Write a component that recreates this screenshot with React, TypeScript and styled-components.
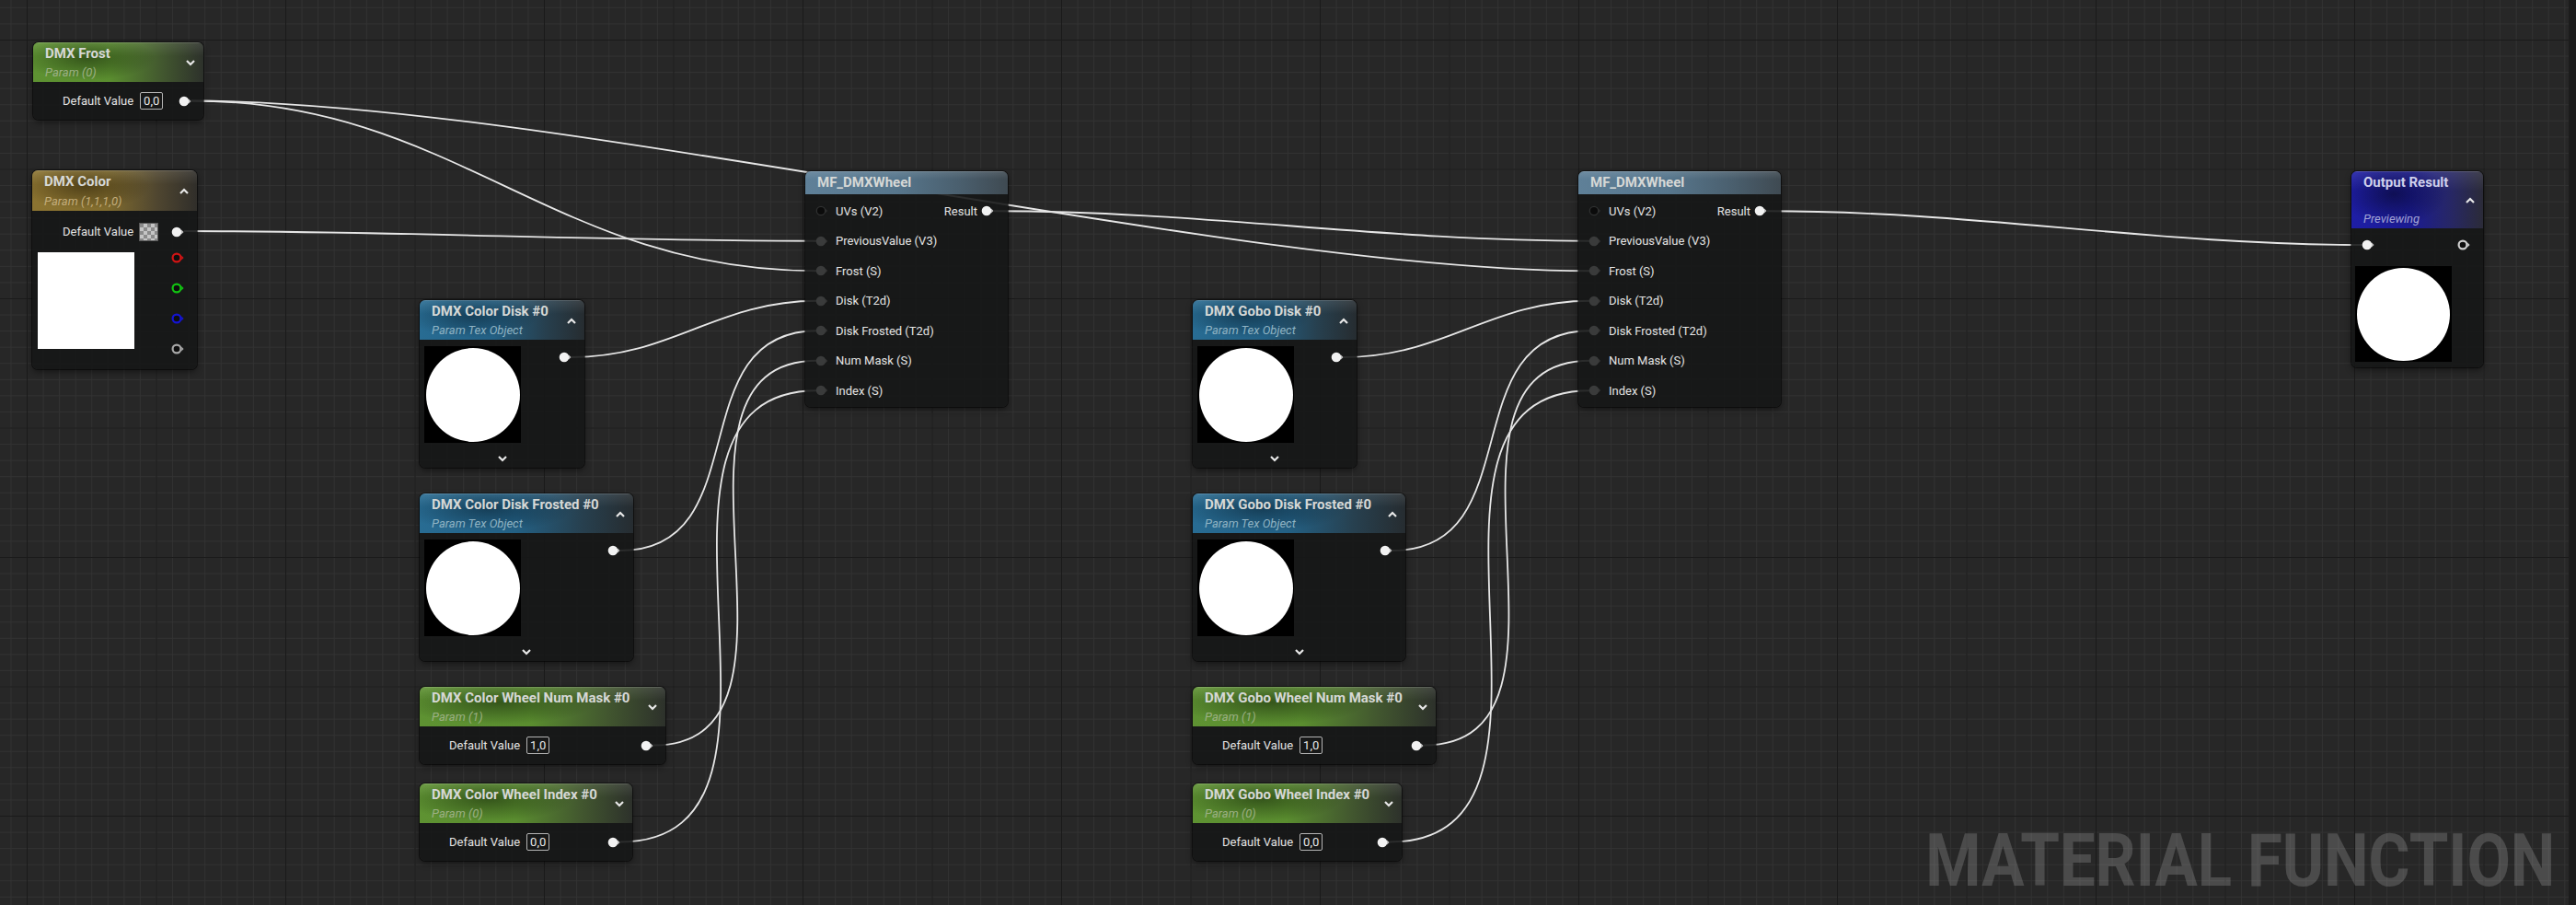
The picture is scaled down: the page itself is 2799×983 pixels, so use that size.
import { FC } from "react";
import styled, { createGlobalStyle } from "styled-components";

type Tint = "green" | "gold" | "blue" | "steel" | "violet";
type Pt = [number, number];

const gloss = "linear-gradient(to bottom, rgba(255,255,255,0.1), rgba(255,255,255,0) 35%)";
const shade = (c: string) =>
  `radial-gradient(ellipse 40% 55% at 32% 40%, ${c}, rgba(0,0,0,0) 100%)`;

const headerBg: Record<Tint, string> = {
  green: `${shade("rgba(22,40,10,0.55)")}, ${gloss}, linear-gradient(to right, #5e9232 0%, #5a8d2f 45%, #42572f 76%, #2d312b 100%)`,
  gold: `${shade("rgba(40,30,8,0.55)")}, ${gloss}, linear-gradient(to right, #8c7431 0%, #816c2e 45%, #4f4630 76%, #302e2a 100%)`,
  blue: `${shade("rgba(8,28,42,0.5)")}, ${gloss}, linear-gradient(to right, #286c93 0%, #236084 45%, #27404f 76%, #262c30 100%)`,
  steel: `${gloss}, linear-gradient(to right, #5f8098 0%, #57768c 45%, #4a5f6e 76%, #3f4a52 100%)`,
  violet: `${shade("rgba(6,6,40,0.6)")}, ${gloss}, linear-gradient(to right, #1e1ea6 0%, #1b1b92 45%, #272764 76%, #2b2b38 100%)`,
};

const subColor: Record<Tint, string> = {
  green: "#9cb084",
  gold: "#c3ad7b",
  blue: "#8fb3c3",
  steel: "#b0c0cc",
  violet: "#a3a4d6",
};

const GlobalStyle = createGlobalStyle`
  html, body {
    margin: 0;
    padding: 0;
    overflow: hidden;
    background: #1c1c1c;
  }
  body {
    font-family: Roboto, "Noto Sans", sans-serif;
  }
`;

const Screen = styled.div`
  display: flex;
  width: 2799px;
  height: 983px;
`;

const Canvas = styled.div`
  position: relative;
  flex: 1;
  height: 983px;
  overflow: hidden;
  background-color: #272727;
  background-image: linear-gradient(to right, #1a1a1a 1px, transparent 1px),
    linear-gradient(to bottom, #1a1a1a 1px, transparent 1px),
    linear-gradient(to right, #323232 1px, transparent 1px),
    linear-gradient(to bottom, #323232 1px, transparent 1px);
  background-size: 140.5px 140.5px, 140.5px 140.5px, 17.5625px 17.5625px,
    17.5625px 17.5625px;
  background-position: 29px 43px;
`;

const EdgeStrip = styled.div`
  width: 8px;
  background: #1c1c1c;
`;

const WireLayer = styled.svg`
  position: absolute;
  left: 0;
  top: 0;
  pointer-events: none;
`;

const Watermark = styled.div`
  position: absolute;
  right: 15px;
  bottom: 0;
  font: 700 80px/96px Roboto, "Noto Sans", sans-serif;
  color: rgba(255, 255, 255, 0.17);
  white-space: nowrap;
  transform: scaleX(0.86);
  transform-origin: right bottom;
`;

const NodeBox = styled.div<{ $x: number; $y: number; $w: number }>`
  position: absolute;
  left: ${(p) => p.$x}px;
  top: ${(p) => p.$y}px;
  width: ${(p) => p.$w}px;
  background: rgba(22, 23, 23, 0.9);
  border-radius: 6px;
  overflow: hidden;
  box-shadow: 0 0 0 1px rgba(0, 0, 0, 0.5), 0 3px 7px rgba(0, 0, 0, 0.45);
  color: #e4e4e4;
`;

const Header = styled.div<{ $tint: Tint; $h: number }>`
  box-sizing: border-box;
  height: ${(p) => p.$h}px;
  display: grid;
  grid-template-columns: 1fr auto;
  grid-template-rows: auto 1fr auto;
  padding: 4px 9px 3px 13px;
  background: ${(p) => headerBg[p.$tint]};
  box-shadow: inset 0 1px 0 rgba(255, 255, 255, 0.14);
`;

const Title = styled.div<{ $tint: Tint }>`
  grid-column: 1;
  grid-row: 1;
  font-size: 15px;
  line-height: 17px;
  font-weight: 700;
  color: ${(p) => (p.$tint === "violet" ? "#cfd0ec" : "#d6d8d6")};
  white-space: nowrap;
`;

const Subtitle = styled.div<{ $tint: Tint }>`
  grid-column: 1;
  grid-row: 3;
  font-size: 13px;
  line-height: 15px;
  font-style: italic;
  color: ${(p) => subColor[p.$tint]};
  white-space: nowrap;
`;

const ChevronSlot = styled.div`
  grid-column: 2;
  grid-row: 1 / span 3;
  align-self: center;
  display: flex;
`;

const ChevronGlyph = styled.svg<{ $down?: boolean }>`
  display: block;
  transform: ${(p) => (p.$down ? "rotate(180deg)" : "none")};
`;

const Row = styled.div<{ $h: number }>`
  display: flex;
  align-items: center;
  height: ${(p) => p.$h}px;
  font-size: 13px;
  white-space: nowrap;
`;

const ParamRow = styled(Row)`
  padding: 0 13px 0 32px;
`;

const ColorRow = styled(Row)`
  padding: 0 14px 0 33px;
`;

const ValueBox = styled.span`
  margin-left: 7px;
  padding: 0 3px;
  height: 17px;
  line-height: 17px;
  border: 1px solid #b4b4b4;
  border-radius: 2px;
  color: #e8e8e8;
`;

const Swatch = styled.span`
  margin-left: 6px;
  width: 19px;
  height: 18px;
  border: 1px solid #5a5a5a;
  background: repeating-conic-gradient(#c4c4c4 0 25%, #8a8a8a 0 50%) 0 0 / 8px 8px;
`;

const PushRight = styled.div`
  margin-left: auto;
  display: flex;
  align-items: center;
  gap: 4px;
`;

const PinGlyph = styled.svg`
  display: block;
  flex: none;
`;

const Preview = styled.div<{ $solid?: boolean; $h?: number }>`
  flex: none;
  width: 105px;
  height: ${(p) => p.$h ?? 105}px;
  background: ${(p) => (p.$solid ? "#ffffff" : "#000000")};
  display: flex;
  align-items: center;
  justify-content: center;
`;

const Disc = styled.div<{ $d?: number }>`
  width: ${(p) => p.$d ?? 102}px;
  height: ${(p) => p.$d ?? 102}px;
  border-radius: 50%;
  background: #ffffff;
`;

const ColorBody = styled.div`
  display: flex;
  padding: 0 14px 16px 6px;
`;

const ChannelColumn = styled.div`
  margin-left: auto;
  display: flex;
  flex-direction: column;
  gap: 21px;
`;

const TexBody = styled.div`
  display: flex;
  align-items: flex-start;
  padding: 7px 14px 0 5px;
`;

const TexPinSlot = styled.div`
  margin-left: auto;
  margin-top: 6px;
`;

const Footer = styled.div`
  display: flex;
  justify-content: center;
  height: 27px;
  padding-top: 14px;
  box-sizing: border-box;
`;

const WheelBody = styled.div`
  padding: 2px 15px 1.5px 11px;
`;

const WheelLabel = styled.span`
  margin-left: 8px;
`;

const OutputRow = styled(Row)`
  padding: 0 14px 0 11px;
`;

const OutputPreview = styled.div`
  padding: 5px 0 6px 4px;
`;

type PinKind = "data" | "ring" | "slot" | "slotDim";

const Pin: FC<{ kind: PinKind; color?: string }> = ({ kind, color = "#f2f2f2" }) => (
  <PinGlyph width={14} height={12} viewBox="0 0 14 12">
    {kind === "data" && (
      <>
        <circle cx="6" cy="6" r="5.3" fill={color} />
        <path d="M11 3.6 L13.6 6 L11 8.4Z" fill="#c2c2c2" />
      </>
    )}
    {kind === "ring" && (
      <>
        <circle cx="6" cy="6" r="4.4" fill="#0e0e0e" stroke={color} strokeWidth="2.2" />
        <path d="M11.2 3.6 L13.6 6 L11.2 8.4Z" fill={color} />
      </>
    )}
    {kind === "slot" && (
      <>
        <circle cx="6" cy="6" r="5.3" fill="#3a3b3b" />
        <path d="M11 3.8 L13.3 6 L11 8.2Z" fill="#333434" />
      </>
    )}
    {kind === "slotDim" && (
      <>
        <circle cx="6" cy="6" r="4.7" fill="#0b0b0b" stroke="#2f3030" strokeWidth="1.3" />
        <path d="M11 3.8 L13.3 6 L11 8.2Z" fill="#2a2b2b" />
      </>
    )}
  </PinGlyph>
);

const Chevron: FC<{ down?: boolean }> = ({ down }) => (
  <ChevronGlyph $down={down} width={10} height={7} viewBox="0 0 10 7">
    <polyline points="1,6 5,2 9,6" fill="none" stroke="#e8e8e8" strokeWidth="2.2" />
  </ChevronGlyph>
);

const NodeHeader: FC<{ tint: Tint; h: number; title: string; sub?: string; chevron?: "up" | "down" }> = ({
  tint,
  h,
  title,
  sub,
  chevron,
}) => (
  <Header $tint={tint} $h={h}>
    <Title $tint={tint}>{title}</Title>
    {sub && <Subtitle $tint={tint}>{sub}</Subtitle>}
    {chevron && (
      <ChevronSlot>
        <Chevron down={chevron === "down"} />
      </ChevronSlot>
    )}
  </Header>
);

interface IScalar {
  x: number;
  y: number;
  w: number;
  title: string;
  sub: string;
  value: string;
}

interface ITex {
  x: number;
  y: number;
  w: number;
  title: string;
}

const scalars: IScalar[] = [
  { x: 36, y: 46, w: 185, title: "DMX Frost", sub: "Param (0)", value: "0,0" },
  { x: 456, y: 746, w: 267, title: "DMX Color Wheel Num Mask #0", sub: "Param (1)", value: "1,0" },
  { x: 456, y: 851, w: 231, title: "DMX Color Wheel Index #0", sub: "Param (0)", value: "0,0" },
  { x: 1296, y: 746, w: 264, title: "DMX Gobo Wheel Num Mask #0", sub: "Param (1)", value: "1,0" },
  { x: 1296, y: 851, w: 227, title: "DMX Gobo Wheel Index #0", sub: "Param (0)", value: "0,0" },
];

const textures: ITex[] = [
  { x: 456, y: 326, w: 179, title: "DMX Color Disk #0" },
  { x: 456, y: 536, w: 232, title: "DMX Color Disk Frosted #0" },
  { x: 1296, y: 326, w: 178, title: "DMX Gobo Disk #0" },
  { x: 1296, y: 536, w: 231, title: "DMX Gobo Disk Frosted #0" },
];

const wheelX = [875, 1715];
const wheelInputs = [
  "UVs (V2)",
  "PreviousValue (V3)",
  "Frost (S)",
  "Disk (T2d)",
  "Disk Frosted (T2d)",
  "Num Mask (S)",
  "Index (S)",
];

const scalarOut = (i: number): Pt => [scalars[i].x + scalars[i].w - 13, scalars[i].y + 43 + 20.5];
const texOut = (i: number): Pt => [textures[i].x + textures[i].w - 14, textures[i].y + 62];
const wheelIn = (wx: number, i: number): Pt => [wx + 13, 213 + 32.5 * i + 16.25];
const wheelOut = (wx: number): Pt => [wx + 205, 229.25];
const colorOut: Pt = [200, 251];
const resultIn: Pt = [2568, 266];

const links: [Pt, Pt][] = [
  [scalarOut(0), wheelIn(875, 2)],
  [scalarOut(0), wheelIn(1715, 2)],
  [colorOut, wheelIn(875, 1)],
  [texOut(0), wheelIn(875, 3)],
  [texOut(1), wheelIn(875, 4)],
  [scalarOut(1), wheelIn(875, 5)],
  [scalarOut(2), wheelIn(875, 6)],
  [texOut(2), wheelIn(1715, 3)],
  [texOut(3), wheelIn(1715, 4)],
  [scalarOut(3), wheelIn(1715, 5)],
  [scalarOut(4), wheelIn(1715, 6)],
  [wheelOut(875), wheelIn(1715, 1)],
  [wheelOut(1715), resultIn],
];

// same tangent rule as the graph editor: horizontal + vertical delta, clamped
const wirePath = ([x0, y0]: Pt, [x1, y1]: Pt) => {
  const t = (Math.min(Math.abs(x1 - x0), 1000) + Math.min(Math.abs(y1 - y0), 1000)) / 3;
  return `M${x0} ${y0} C${x0 + t} ${y0} ${x1 - t} ${y1} ${x1} ${y1}`;
};

const ScalarNode: FC<{ item: IScalar }> = ({ item }) => (
  <NodeBox $x={item.x} $y={item.y} $w={item.w}>
    <NodeHeader tint="green" h={43} title={item.title} sub={item.sub} chevron="down" />
    <ParamRow $h={41}>
      <span>Default Value</span>
      <ValueBox>{item.value}</ValueBox>
      <PushRight>
        <Pin kind="data" />
      </PushRight>
    </ParamRow>
  </NodeBox>
);

const TextureNode: FC<{ item: ITex }> = ({ item }) => (
  <NodeBox $x={item.x} $y={item.y} $w={item.w}>
    <NodeHeader tint="blue" h={43} title={item.title} sub="Param Tex Object" chevron="up" />
    <TexBody>
      <Preview>
        <Disc />
      </Preview>
      <TexPinSlot>
        <Pin kind="data" />
      </TexPinSlot>
    </TexBody>
    <Footer>
      <Chevron down />
    </Footer>
  </NodeBox>
);

const ColorNode: FC = () => (
  <NodeBox $x={35} $y={185} $w={179}>
    <NodeHeader tint="gold" h={44} title="DMX Color" sub="Param (1,1,1,0)" chevron="up" />
    <ColorRow $h={45}>
      <span>Default Value</span>
      <Swatch />
      <PushRight>
        <Pin kind="data" />
      </PushRight>
    </ColorRow>
    <ColorBody>
      <Preview $solid />
      <ChannelColumn>
        <Pin kind="ring" color="#d01414" />
        <Pin kind="ring" color="#12c412" />
        <Pin kind="ring" color="#1414d2" />
        <Pin kind="ring" color="#a8a8a8" />
      </ChannelColumn>
    </ColorBody>
  </NodeBox>
);

const WheelNode: FC<{ x: number }> = ({ x }) => (
  <NodeBox $x={x} $y={186} $w={220}>
    <NodeHeader tint="steel" h={25} title="MF_DMXWheel" />
    <WheelBody>
      {wheelInputs.map((name, i) => (
        <Row $h={32.5} key={name}>
          <Pin kind={i === 0 ? "slotDim" : "slot"} />
          <WheelLabel>{name}</WheelLabel>
          {i === 0 && (
            <PushRight>
              <span>Result</span>
              <Pin kind="data" />
            </PushRight>
          )}
        </Row>
      ))}
    </WheelBody>
  </NodeBox>
);

const OutputNode: FC = () => (
  <NodeBox $x={2555} $y={186} $w={143}>
    <NodeHeader tint="violet" h={62} title="Output Result" sub="Previewing" chevron="up" />
    <OutputRow $h={36}>
      <Pin kind="data" />
      <PushRight>
        <Pin kind="ring" color="#cfcfcf" />
      </PushRight>
    </OutputRow>
    <OutputPreview>
      <Preview $h={104}>
        <Disc $d={101} />
      </Preview>
    </OutputPreview>
  </NodeBox>
);

const App: FC = () => (
  <>
    <GlobalStyle />
    <Screen>
      <Canvas>
        <WireLayer width={2791} height={983} viewBox="0 0 2791 983">
          {links.map(([a, b], i) => (
            <path key={i} d={wirePath(a, b)} fill="none" stroke="#e6e6e6" strokeWidth="1.8" />
          ))}
        </WireLayer>
        {scalars.map((s) => (
          <ScalarNode key={s.title} item={s} />
        ))}
        {textures.map((t) => (
          <TextureNode key={t.title} item={t} />
        ))}
        <ColorNode />
        {wheelX.map((x) => (
          <WheelNode key={x} x={x} />
        ))}
        <OutputNode />
        <Watermark>MATERIAL FUNCTION</Watermark>
      </Canvas>
      <EdgeStrip />
    </Screen>
  </>
);

export default App;
